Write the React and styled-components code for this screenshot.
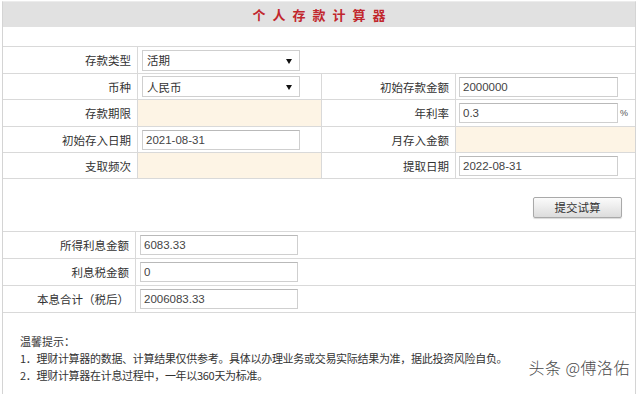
import styled, { createGlobalStyle } from 'styled-components'

const Global = createGlobalStyle`
  body {
    margin: 0;
    background: #fff;
    font-family: "Liberation Sans", "Noto Sans CJK SC", sans-serif;
    font-size: 12px;
    color: #333;
  }
`

const Page = styled.div`
  position: relative;
  width: 634px;
  height: 394px;
  overflow: hidden;
  margin-left: 2px;
  padding-top: 1px;
  box-sizing: border-box;
`

const Frame = styled.div`
  border-left: 1px solid #d4d4d4;
  border-right: 1px solid #d4d4d4;
  border-top: 1px solid #ececec;
  min-height: 400px;
`

const TitleBar = styled.div`
  height: 25px;
  background: #e1e1e1;
  display: flex;
  align-items: center;
  justify-content: center;
  color: #c1272d;
  font-weight: bold;
  font-size: 13px;
  letter-spacing: 7px;
  padding-left: 7px;
  font-family: "Noto Sans CJK SC", sans-serif;
`

const Spacer = styled.div`
  height: ${p => p.h}px;
  border-bottom: 1px solid #d9d9d9;
  box-sizing: border-box;
`

const Row = styled.div`
  display: grid;
  grid-template-columns: ${p => p.cols || '135px 184px 134px 1fr'};
  height: ${p => p.h || 26}px;
  border-bottom: 1px solid #d9d9d9;
  box-sizing: border-box;
`

const Label = styled.div`
  border-right: 1px solid #d9d9d9;
  display: flex;
  align-items: center;
  justify-content: flex-end;
  padding-right: 6px;
  font-family: "Noto Sans CJK SC", sans-serif;
  font-size: 11.5px;
  color: #333;
`

const Cell = styled.div`
  display: flex;
  align-items: center;
  padding-left: ${p => p.pad ?? 4}px;
  background: ${p => (p.peach ? '#fdf4e5' : 'transparent')};
  border-right: ${p => (p.divider ? '1px solid #d9d9d9' : 'none')};
  grid-column: ${p => p.span || 'auto'};
`

const Field = styled.input`
  width: ${p => p.w || 158}px;
  height: 20px;
  box-sizing: border-box;
  border: 1px solid #cfcfcf;
  border-top-color: #b9b9b9;
  padding: 0 3px;
  margin: 0;
  font-family: "Liberation Sans", sans-serif;
  font-size: 11.5px;
  color: #444;
  background: #fff;
  outline: none;
`

const Select = styled.div`
  position: relative;
  width: 158px;
  height: 21px;
  box-sizing: border-box;
  border: 1px solid #cfcfcf;
  padding-left: 4px;
  display: flex;
  align-items: center;
  font-family: "Noto Sans CJK SC", sans-serif;
  font-size: 11.5px;
  color: #333;

  &::after {
    content: '';
    position: absolute;
    right: 7px;
    top: 8px;
    border-left: 3px solid transparent;
    border-right: 3px solid transparent;
    border-top: 5px solid #111;
  }
`

const Percent = styled.span`
  font-size: 9px;
  color: #555;
  margin-left: 2px;
`

const ButtonRow = styled.div`
  height: 53px;
  display: flex;
  align-items: center;
  justify-content: flex-end;
  padding-right: 13px;
  padding-top: 4px;
  border-bottom: 1px solid #d9d9d9;
  box-sizing: border-box;
`

const Button = styled.button`
  width: 89px;
  height: 21px;
  border: 1px solid #a9a9a9;
  border-radius: 2px;
  background: linear-gradient(#fbfbfb, #dcdcdc);
  box-shadow: 0 1px 1px rgba(0, 0, 0, 0.15);
  font-family: "Noto Sans CJK SC", sans-serif;
  font-size: 11.5px;
  color: #333;
  padding: 0;
`

const Notes = styled.div`
  padding: 20px 0 0 17px;
  font-family: "Noto Sans CJK SC", sans-serif;
  font-size: 11px;
  line-height: 17px;
  color: #333;
`

const Note = styled.div`
  letter-spacing: -0.3px;
`

const Watermark = styled.div`
  position: absolute;
  right: 6px;
  top: 355px;
  font-family: "Noto Sans CJK SC", sans-serif;
  font-size: 16px;
  font-weight: 300;
  color: #4a4a4a;
  letter-spacing: 0.5px;
`

export default function App() {
  return (
    <Page>
      <Global />
      <Frame>
        <TitleBar>个人存款计算器</TitleBar>
        <Spacer h={20} />

        <Row h={27}>
          <Label>存款类型</Label>
          <Cell span="2 / 5">
            <Select>活期</Select>
          </Cell>
        </Row>
        <Row>
          <Label>币种</Label>
          <Cell divider>
            <Select>人民币</Select>
          </Cell>
          <Label>初始存款金额</Label>
          <Cell pad={3}>
            <Field readOnly value="2000000" w={159} />
          </Cell>
        </Row>
        <Row h={27}>
          <Label>存款期限</Label>
          <Cell peach divider />
          <Label>年利率</Label>
          <Cell pad={3}>
            <Field readOnly value="0.3" w={159} />
            <Percent>%</Percent>
          </Cell>
        </Row>
        <Row>
          <Label>初始存入日期</Label>
          <Cell divider>
            <Field readOnly value="2021-08-31" />
          </Cell>
          <Label>月存入金额</Label>
          <Cell peach />
        </Row>
        <Row>
          <Label>支取频次</Label>
          <Cell peach divider />
          <Label>提取日期</Label>
          <Cell pad={3}>
            <Field readOnly value="2022-08-31" w={159} />
          </Cell>
        </Row>

        <ButtonRow>
          <Button>提交试算</Button>
        </ButtonRow>

        <Row cols="133px 1fr" h={27}>
          <Label>所得利息金额</Label>
          <Cell>
            <Field readOnly value="6083.33" />
          </Cell>
        </Row>
        <Row cols="133px 1fr" h={27}>
          <Label>利息税金额</Label>
          <Cell>
            <Field readOnly value="0" />
          </Cell>
        </Row>
        <Row cols="133px 1fr" h={27}>
          <Label>本息合计（税后）</Label>
          <Cell>
            <Field readOnly value="2006083.33" />
          </Cell>
        </Row>

        <Notes>
          <div>温馨提示：</div>
          <Note>1．理财计算器的数据、计算结果仅供参考。具体以办理业务或交易实际结果为准，据此投资风险自负。</Note>
          <Note>2．理财计算器在计息过程中，一年以360天为标准。</Note>
        </Notes>
      </Frame>
      <Watermark>头条 @傅洛佑</Watermark>
    </Page>
  )
}
